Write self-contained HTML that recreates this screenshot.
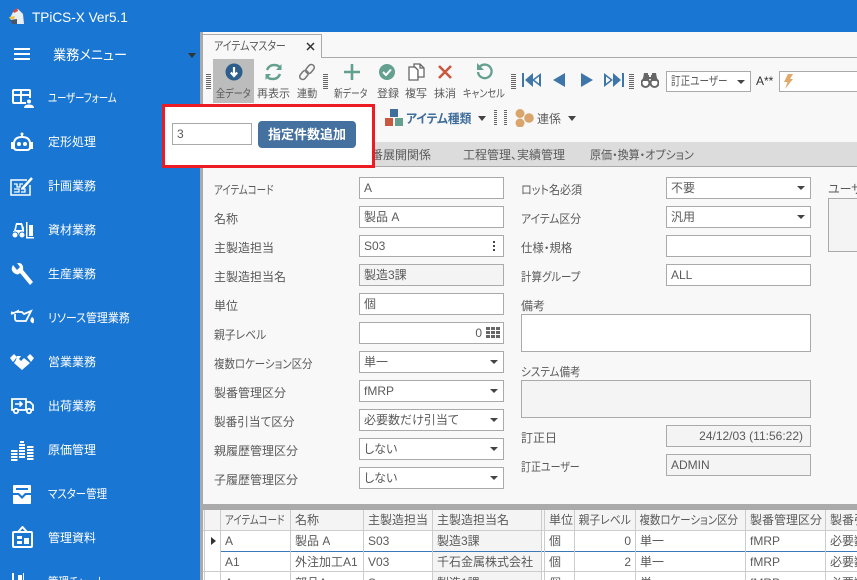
<!DOCTYPE html>
<html lang="ja"><head><meta charset="utf-8"><title>TPiCS-X</title>
<style>
*{box-sizing:border-box}
html,body{margin:0;padding:0;width:857px;height:580px;overflow:hidden}
#w{width:857px;height:580px;position:relative;overflow:hidden;background:#f8f8f8;font-family:"Liberation Sans","Noto Sans CJK JP",sans-serif;font-size:12px;color:#5a5a5a;font-feature-settings:"palt"}
.a,.l,.f,.m,.t,.c{position:absolute;white-space:nowrap}
.l,.m,.t,.c,.q{transform:scaleX(var(--s,1));transform-origin:0 0}
.q{display:inline-block}
.l{left:214px;height:18px;line-height:18px}
.r{left:521px}
.f{left:359px;width:145px;height:22px;border:1px solid #aaa;background:#fff;line-height:20px;padding-left:4px}
.f.x{left:666px}
.g{background:#f4f4f4}
.f.s::after{content:"";position:absolute;right:5px;top:8px;border:4px solid transparent;border-top:4px solid #444;border-bottom:0;border-left-width:4.5px;border-right-width:4.5px}
.m{left:48px;color:#fff;height:18px;line-height:18px;overflow:hidden}
.t{top:86px;font-size:11px;height:16px;line-height:16px;color:#5a5a5a}
.c{height:20px;line-height:20px;font-size:12px;color:#5a5a5a;padding-left:4px;overflow:hidden}
.e{height:7px}
.gr{position:absolute;width:5px;background:repeating-linear-gradient(#666 0 1px,#f8f8f8 1px 2px)}
.v{position:absolute;width:1px;background:#ccc;top:510px;height:70px}
svg{position:absolute;display:block}
</style></head><body><div id="w">

<!-- header & sidebar -->
<div class="a" style="left:0;top:0;width:857px;height:32px;background:#1976d2"></div>
<div class="a" style="left:0;top:0;width:200px;height:580px;background:#1976d2"></div>
<div class="a" style="left:200px;top:32px;width:3px;height:548px;background:#aaa"></div>

<svg style="left:8px;top:8px" width="18" height="18" viewBox="0 0 18 18"><path d="M2 10L5 4 10 1 15 6 16 16 5 16Z" fill="#e8eef2"/><path d="M5 3L9 0 10 3 6 5Z" fill="#d9483b"/><path d="M1 9L7 8 6 11 2 11Z" fill="#f0c23c"/><path d="M2 12L9 11 9 16 4 16Z" fill="#46566a"/></svg>
<div class="a" style="left:32px;top:7px;font-size:14px;line-height:20px;color:#fff;height:20px;transform:scaleX(.97);transform-origin:0 0">TPiCS-X Ver5.1</div>

<svg style="left:14px;top:47px" width="16" height="14"><path d="M0 2H16M0 7H16M0 12H16" stroke="#fff" stroke-width="2"/></svg>
<div class="a" style="left:53px;top:45px;font-size:14px;line-height:20px;color:#fff;transform:scaleX(.94);transform-origin:0 0">業務メニュー</div>
<div class="a" style="left:188px;top:53px;border:4px solid transparent;border-top:5px solid #333;border-bottom:0"></div>

<div class="m" style="top:89px;--s:.78">ユーザーフォーム</div>
<div class="m" style="top:133px">定形処理</div>
<div class="m" style="top:177px">計画業務</div>
<div class="m" style="top:221px">資材業務</div>
<div class="m" style="top:265px">生産業務</div>
<div class="m" style="top:309px;--s:.91">リソース管理業務</div>
<div class="m" style="top:353px">営業業務</div>
<div class="m" style="top:397px">出荷業務</div>
<div class="m" style="top:441px">原価管理</div>
<div class="m" style="top:485px;--s:.87">マスター管理</div>
<div class="m" style="top:529px">管理資料</div>
<div class="m e" style="top:573px;--s:.87">管理チャート</div>

<!-- sidebar icons -->
<svg style="left:12px;top:89px" width="22" height="20" fill="none" stroke="#fff" stroke-width="2"><path d="M14 14H2Q1 14 1 13V2Q1 1 2 1H17Q18 1 18 2V9M1 6H18M9 1V14"/><circle cx="17" cy="12.5" r="2" fill="#fff" stroke="none"/><path d="M12 19Q12 15.500 17 15.500T22 19Z" fill="#fff" stroke="none"/></svg>
<svg style="left:11px;top:132px" width="23" height="20" fill="none" stroke="#fff" stroke-width="2"><circle cx="11" cy="2" r="1.500" fill="#fff" stroke="none"/><path d="M11 2V5"/><path d="M3 15V12Q3 5 11 5T19 12V15Q19 18 16 18H6Q3 18 3 15Z"/><path d="M3 11H1V16H3M19 11H21V16H19"/><circle cx="8" cy="12" r="2" fill="#fff" stroke="none"/><circle cx="14" cy="12" r="2" fill="#fff" stroke="none"/></svg>
<svg style="left:10px;top:177px" width="24" height="20" fill="none" stroke="#fff" stroke-width="1.500"><path d="M17 3H1V18H20V8"/><path d="M4 7H7V10H10V7H13M4 12H9V15H4M11 12H15V15H11" stroke-width="1.300"/><path d="M12 12L22 1" stroke-width="2.500"/></svg>
<svg style="left:11px;top:222px" width="23" height="17" fill="#fff"><path d="M3 9L5 1H11L13 6V13H2V9ZM6 3L5 8H11L10 3Z" fill-rule="evenodd"/><circle cx="4" cy="13" r="3" stroke="#1976d2"/><circle cx="11" cy="13" r="3" stroke="#1976d2"/><path d="M15 0H16.500V15H15Z"/><path d="M18 3H22V14H18Z"/><path d="M15 15H23V16.500H15Z"/></svg>
<svg style="left:11px;top:263px" width="23" height="23"><path d="M2 2Q-1 7 3 10T9 10L19 22 22 19 12 7Q13 2 9 0L6 0 9 4 6 7Z" fill="#fff"/></svg>
<svg style="left:10px;top:309px" width="25" height="15" fill="none" stroke="#fff" stroke-width="1.800"><path d="M1 5L6 3H12L14 5 21 2 16 12H7Q5 12 5 9V5"/><path d="M1 3L4 4 9 1" stroke-width="1.300"/><path d="M22 8Q19 11 21.500 13.500T24 11Q24 9 22 8Z" fill="#fff" stroke="none"/></svg>
<svg style="left:10px;top:354px" width="24" height="17" fill="#fff"><path d="M0 4L4 0 7 3 3 8ZM24 4L20 0 17 3 21 8Z"/><path d="M7 2H11L9 5 11 7 14 4 20 9 12 16 4 9 6 6Z"/></svg>
<svg style="left:11px;top:398px" width="23" height="17" fill="none" stroke="#fff" stroke-width="1.800"><path d="M3 12H1V1H15V12H7M15 4H19L22 7V12H20M15 12H16"/><path d="M4 6H11M8.500 3.500L11 6 8.500 8.500" stroke-width="1.600"/><circle cx="5" cy="13" r="2.200"/><circle cx="18" cy="13" r="2.200"/></svg>
<svg style="left:11px;top:441px" width="23" height="20" fill="#fff"><path d="M8 3H14V5H8ZM8 6H14V8H8ZM8 9H14V11H8ZM8 12H14V14H8ZM8 15H14V17H8ZM16 5H22.500V7H16ZM16 8H22.500V10H16ZM16 11H22.500V13H16ZM16 14H22.500V16H16ZM16 17H22.500V19H16ZM0 9H6.500V11H0ZM0 12H6.500V14H0ZM0 15H6.500V17H0ZM0 18H6.500V20H0ZM9 0H13V2H9Z"/></svg>
<svg style="left:13px;top:485px" width="18" height="19"><path d="M1 0H17Q18 0 18 1V8H12L9 11 6 8H0V1Q0 0 1 0ZM3 3V5H15V3Z" fill="#fff" fill-rule="evenodd"/><path d="M0 10H5L9 14 13 10H18V18Q18 19 17 19H1Q0 19 0 18Z" fill="#fff"/></svg>
<svg style="left:12px;top:526px" width="21" height="23" fill="none" stroke="#fff" stroke-width="2"><path d="M2 6H19Q20 6 20 7V20Q20 21 19 21H2Q1 21 1 20V7Q1 6 2 6ZM6 6L10.500 1 15 6" /><path d="M5 10H10V13H5ZM5 15H10V18H5Z" fill="#fff" stroke="none"/><path d="M12 12H17V18H12Z" fill="#fff" stroke="none"/></svg>
<svg style="left:12px;top:573px" width="15" height="7" fill="#fff"><path d="M0 0H2V7H0ZM6 2H10V7H6ZM11 0H12V7H11Z"/></svg>

<!-- tab -->
<div class="a" style="left:203px;top:57px;width:654px;height:1px;background:#aaa"></div>
<div class="a" style="left:202px;top:34px;width:120px;height:24px;border:1px solid #aaa;border-bottom:0;background:#f8f8f8"></div>
<div class="t" style="left:214px;top:37px;height:18px;line-height:18px;font-size:12px;--s:.83">アイテムマスター</div>
<svg style="left:306px;top:42px" width="9" height="9"><path d="M1 1L8 8M8 1L1 8" stroke="#333" stroke-width="1.500"/></svg>

<!-- toolbar row 1 -->
<div class="gr" style="left:206px;top:74px;height:15px"></div>
<div class="a" style="left:213px;top:59px;width:41px;height:44px;background:#bcbcbc"></div>
<svg style="left:225px;top:63px" width="18" height="18"><circle cx="9" cy="9" r="8.500" fill="#2d5d8b"/><path d="M9 4V12M5.800 9.500L9 13 12.200 9.500" stroke="#fff" stroke-width="2.200" fill="none"/></svg>
<svg style="left:265px;top:63px" width="17" height="18" fill="none" stroke="#64a08f" stroke-width="2.500"><path d="M2 7Q4 2 9 2T15 5"/><path d="M15 11Q13 16 8 16T2 13"/><path d="M16.500 1V7H11Z" fill="#64a08f" stroke="none"/><path d="M0.500 17V11H6Z" fill="#64a08f" stroke="none"/></svg>
<svg style="left:298px;top:63px" width="18" height="18" fill="none" stroke="#777" stroke-width="1.500"><rect x="9" y="1" width="6" height="10" rx="3" transform="rotate(40 12 6)"/><rect x="3" y="7" width="6" height="10" rx="3" transform="rotate(40 6 12)"/></svg>
<svg style="left:344px;top:64px" width="16" height="16"><path d="M8 0V16M0 8H16" stroke="#64a08f" stroke-width="2.600"/></svg>
<svg style="left:379px;top:64px" width="16" height="16"><circle cx="8" cy="8" r="8" fill="#64a08f"/><path d="M4 8L7 11 12 5.500" fill="none" stroke="#fff" stroke-width="2"/></svg>
<svg style="left:408px;top:63px" width="17" height="18" fill="#fff" stroke="#666" stroke-width="1.300"><path d="M1 4H7L10 7V17H1Z"/><path d="M6 1H12L16 5V14H10V7L7 4H6Z"/><path d="M12 1V5H16" fill="none"/></svg>
<svg style="left:438px;top:65px" width="14" height="14"><path d="M1 1L13 13M13 1L1 13" stroke="#c9583f" stroke-width="2.600"/></svg>
<svg style="left:476px;top:63px" width="17" height="17" fill="none" stroke="#64a08f" stroke-width="2.300"><path d="M4 3.500A6.800 6.800 0 1 1 2 9"/><path d="M1 0V7H8Z" fill="#64a08f" stroke="none"/></svg>

<div class="t" style="left:216px;--s:.83">全データ</div>
<div class="t" style="left:257px">再表示</div>
<div class="t" style="left:297px;--s:.92">連動</div>
<div class="gr" style="left:323px;top:74px;height:15px"></div>
<div class="t" style="left:334px;--s:.8">新データ</div>
<div class="t" style="left:377px">登録</div>
<div class="t" style="left:405px">複写</div>
<div class="t" style="left:434px">抹消</div>
<div class="t" style="left:463px;--s:.84">キャンセル</div>
<div class="gr" style="left:511px;top:74px;height:15px"></div>

<svg style="left:522px;top:73px" width="20" height="14" fill="#3f76a8"><path d="M0 0H2V14H0Z"/><path d="M3 7L11 0V14Z"/><path d="M10 7L19 0V14L10 7ZM12.500 7L17 10.500V3.500Z" fill-rule="evenodd"/></svg>
<svg style="left:553px;top:73px" width="12" height="14" fill="#3f76a8"><path d="M0 7L12 0V14Z"/></svg>
<svg style="left:581px;top:73px" width="12" height="14" fill="#3f76a8"><path d="M12 7L0 0V14Z"/></svg>
<svg style="left:604px;top:73px" width="20" height="14" fill="#3f76a8"><path d="M18 0H20V14H18Z"/><path d="M17 7L9 0V14Z"/><path d="M9 7L0 0V14L9 7ZM6.500 7L2 10.500V3.500Z" fill-rule="evenodd"/></svg>
<div class="gr" style="left:629px;top:74px;height:15px"></div>
<svg style="left:641px;top:72px" width="18" height="16" fill="#666"><path d="M3 1H7V5H11V1H15L16 7H2Z"/><circle cx="4.500" cy="11" r="4" fill="#fff" stroke="#666" stroke-width="2"/><circle cx="13.500" cy="11" r="4" fill="#fff" stroke="#666" stroke-width="2"/><path d="M1 9L3 3H8V9ZM10 3H15L17 9H10Z"/></svg>
<div class="f s" style="left:666px;top:71px;width:85px;height:21px;line-height:19px"><span class="q" style="--s:.8">訂正ユーザー</span></div>
<div class="a" style="left:756px;top:72px;height:18px;line-height:18px;color:#333">A**</div>
<div class="f" style="left:779px;top:71px;width:78px;height:21px;border-right:0"></div>
<svg style="left:783px;top:74px" width="10" height="15"><path d="M5 0H10L7 5H10L2 15 4.500 8H1Z" fill="#e0a869"/></svg>

<!-- toolbar row 2 -->
<svg style="left:385px;top:109px" width="18" height="18"><rect x="5" y="0" width="8" height="8" fill="#3f6d9c"/><rect x="0" y="9" width="8" height="8" fill="#c9583f"/><rect x="10" y="9" width="8" height="8" fill="#64a08f"/></svg>
<div class="a" style="left:406px;top:110px;height:18px;line-height:18px;font-size:12.500px;color:#3f6d9c;font-weight:bold;transform:scaleX(.94);transform-origin:0 0">アイテム種類</div>
<div class="a" style="left:478px;top:116px;border:4.500px solid transparent;border-top:5px solid #444;border-bottom:0"></div>
<div class="gr" style="left:494px;top:110px;height:15px;width:3px"></div>
<div class="gr" style="left:504px;top:110px;height:15px;width:3px"></div>
<svg style="left:515px;top:109px" width="19" height="18" fill="#d9a56c"><circle cx="5" cy="4.500" r="4.500"/><circle cx="14" cy="9" r="4.800"/><circle cx="5" cy="14" r="4.500"/></svg>
<div class="a" style="left:537px;top:110px;height:18px;line-height:18px">連係</div>
<div class="a" style="left:568px;top:116px;border:4.500px solid transparent;border-top:5px solid #444;border-bottom:0"></div>

<!-- form tabs -->
<div class="a" style="left:203px;top:142px;width:654px;height:25px;background:#dcdcdc;border-bottom:1px solid #aaa"></div>
<div class="a" style="left:371px;top:146px;height:18px;line-height:18px">番展開関係</div>
<div class="a" style="left:463px;top:146px;height:18px;line-height:18px">工程管理、実績管理</div>
<div class="l" style="left:590px;top:146px;--s:.92">原価・換算・オプション</div>

<!-- form left -->
<div class="l" style="top:181px;--s:.79">アイテムコード</div><div class="f" style="top:177px">A</div>
<div class="l" style="top:210px">名称</div><div class="f" style="top:206px">製品 A</div>
<div class="l" style="top:239px">主製造担当</div><div class="f" style="top:235px">S03<svg style="right:7px;top:5px;left:auto" width="3" height="11" fill="#444"><rect width="2" height="2" y="0"/><rect width="2" height="2" y="4"/><rect width="2" height="2" y="8"/></svg></div>
<div class="l" style="top:268px">主製造担当名</div><div class="f g" style="top:264px">製造3課</div>
<div class="l" style="top:297px">単位</div><div class="f" style="top:293px">個</div>
<div class="l" style="top:326px;--s:.9">親子レベル</div><div class="f" style="top:322px;text-align:right;padding-right:21px">0<svg style="left:auto;right:3px;top:4px" width="14" height="12" fill="#666"><path d="M0 0H4V3H0ZM5 0H9V3H5ZM10 0H14V3H10ZM0 4H4V7H0ZM5 4H9V7H5ZM10 4H14V7H10ZM0 8H4V11H0ZM5 8H9V11H5ZM10 8H14V11H10Z"/></svg></div>
<div class="l" style="top:355px;--s:.87">複数ロケーション区分</div><div class="f s" style="top:351px">単一</div>
<div class="l" style="top:384px">製番管理区分</div><div class="f s" style="top:380px">fMRP</div>
<div class="l" style="top:413px;--s:.97">製番引当て区分</div><div class="f s" style="top:409px">必要数だけ引当て</div>
<div class="l" style="top:442px">親履歴管理区分</div><div class="f s" style="top:438px">しない</div>
<div class="l" style="top:471px">子履歴管理区分</div><div class="f s" style="top:467px">しない</div>

<!-- form right -->
<div class="l r" style="top:181px;--s:.92">ロット名必須</div><div class="f x s" style="top:177px">不要</div>
<div class="l r" style="top:210px;--s:.9">アイテム区分</div><div class="f x s" style="top:206px">汎用</div>
<div class="l r" style="top:239px;--s:.95">仕様・規格</div><div class="f x" style="top:235px"></div>
<div class="l r" style="top:268px;--s:.87">計算グループ</div><div class="f x" style="top:264px">ALL</div>
<div class="l r" style="top:297px">備考</div>
<div class="f" style="left:521px;top:314px;width:290px;height:38px"></div>
<div class="l r" style="top:363px;--s:.88">システム備考</div>
<div class="f g" style="left:521px;top:380px;width:290px;height:38px"></div>
<div class="l r" style="top:429px">訂正日</div><div class="f x g" style="top:425px;text-align:right;padding-right:7px">24/12/03 (11:56:22)</div>
<div class="l r" style="top:458px;--s:.83">訂正ユーザー</div><div class="f x g" style="top:454px">ADMIN</div>
<div class="l" style="left:828px;top:180px;width:29px;overflow:hidden">ユーザー</div>
<div class="f g" style="left:828px;top:198px;width:29px;height:54px;border-right:0"></div>

<!-- grid -->
<div class="a" style="left:203px;top:504px;width:654px;height:6px;background:#aaa"></div>
<div class="a" style="left:203px;top:510px;width:654px;height:20px;background:#f4f4f4"></div>
<div class="a" style="left:203px;top:530px;width:654px;height:50px;background:#fff"></div>
<div class="a" style="left:433px;top:531px;width:108px;height:49px;background:#f4f4f4"></div>
<div class="a" style="left:203px;top:530px;width:654px;height:1px;background:#ccc"></div>
<div class="a" style="left:221px;top:551px;width:636px;height:1px;background:#3a78b8"></div>
<div class="a" style="left:203px;top:571px;width:654px;height:1px;background:#ccc"></div>
<div class="v" style="left:204px"></div><div class="v" style="left:220px"></div><div class="v" style="left:290px"></div><div class="v" style="left:363px"></div><div class="v" style="left:432px"></div><div class="v" style="left:541px"></div><div class="v" style="left:544px"></div><div class="v" style="left:574px"></div><div class="v" style="left:635px"></div><div class="v" style="left:745px"></div><div class="v" style="left:825px"></div>
<div class="a" style="left:211px;top:537px;border:4px solid transparent;border-left:5px solid #333;border-right:0"></div>

<div class="c" style="left:221px;top:510px;--s:.79;padding-left:5px">アイテムコード</div>
<div class="c" style="left:291px;top:510px">名称</div>
<div class="c" style="left:364px;top:510px">主製造担当</div>
<div class="c" style="left:433px;top:510px">主製造担当名</div>
<div class="c" style="left:545px;top:510px">単位</div>
<div class="c" style="left:575px;top:510px;--s:.9">親子レベル</div>
<div class="c" style="left:636px;top:510px;--s:.87">複数ロケーション区分</div>
<div class="c" style="left:746px;top:510px">製番管理区分</div>
<div class="c" style="left:826px;top:510px;width:31px">製番引当て区分</div>

<div class="c" style="left:221px;top:531px">A</div>
<div class="c" style="left:291px;top:531px">製品 A</div>
<div class="c" style="left:364px;top:531px">S03</div>
<div class="c" style="left:433px;top:531px">製造3課</div>
<div class="c" style="left:545px;top:531px">個</div>
<div class="c" style="left:575px;top:531px;width:60px;text-align:right;padding-right:4px">0</div>
<div class="c" style="left:636px;top:531px">単一</div>
<div class="c" style="left:746px;top:531px">fMRP</div>
<div class="c" style="left:826px;top:531px;width:31px">必要数だけ</div>

<div class="c" style="left:221px;top:552px">A1</div>
<div class="c" style="left:291px;top:552px">外注加工A1</div>
<div class="c" style="left:364px;top:552px">V03</div>
<div class="c" style="left:433px;top:552px;width:108px">千石金属株式会社</div>
<div class="c" style="left:545px;top:552px">個</div>
<div class="c" style="left:575px;top:552px;width:60px;text-align:right;padding-right:4px">2</div>
<div class="c" style="left:636px;top:552px">単一</div>
<div class="c" style="left:746px;top:552px">fMRP</div>
<div class="c" style="left:826px;top:552px;width:31px">必要数だけ</div>

<div class="c e" style="left:221px;top:573px">A</div>
<div class="c e" style="left:291px;top:573px">部品A</div>
<div class="c e" style="left:364px;top:573px">S</div>
<div class="c e" style="left:433px;top:573px">製造1課</div>
<div class="c e" style="left:545px;top:573px">個</div>
<div class="c e" style="left:636px;top:573px">単一</div>
<div class="c e" style="left:746px;top:573px">fMRP</div>
<div class="c e" style="left:826px;top:573px;width:31px">必要数だけ</div>

<!-- popup -->
<div class="a" style="left:162px;top:104px;width:213px;height:64px;background:#fff;border:3px solid #ed1c24"></div>
<div class="f" style="left:172px;top:123px;width:80px;height:22px">3</div>
<div class="a" style="left:258px;top:121px;width:98px;height:27px;background:#44719f;border-radius:4px;color:#fff;font-weight:bold;font-size:13px;line-height:27px;text-align:center">指定件数追加</div>

</div></body></html>
